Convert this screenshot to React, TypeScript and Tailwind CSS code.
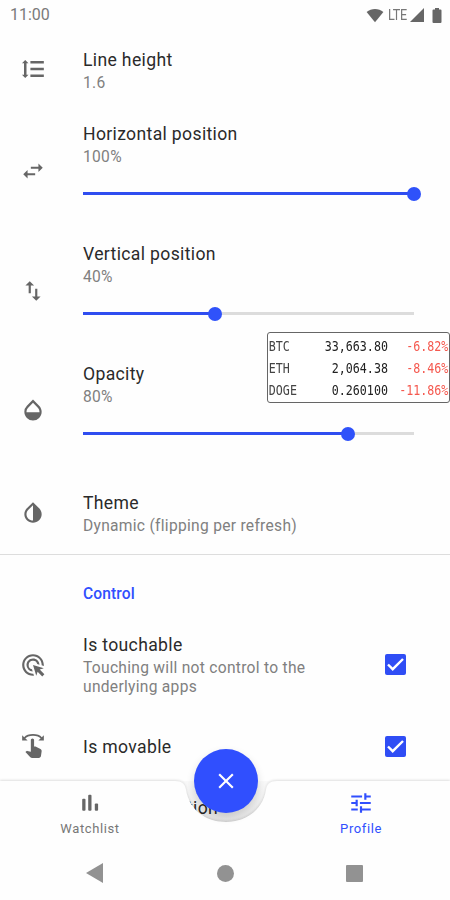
import React from "react";
import {
  MdAdsClick,
  MdClose,
  MdInvertColors,
  MdOpacity,
  MdSwapHoriz,
  MdSwapVert,
  MdSwipe,
  MdTune,
} from "react-icons/md";

interface SettingProps {
  icon: React.ReactNode;
  title: string;
  summary?: string;
  className: string;
  iconClassName?: string;
  children?: React.ReactNode;
  checked?: boolean;
}

function Setting({ icon, title, summary, className, iconClassName = "", children, checked }: SettingProps) {
  return (
    <div className={`flex shrink-0 ${className}`}>
      <div className={`ml-5 w-[63px] shrink-0 text-[26px] text-[#666] ${iconClassName}`}>{icon}</div>
      <div className="w-[331px] shrink-0">
        <div className="flex">
          <div className="grow">
            <h2 className="text-[17.6px] leading-6 tracking-[0.34px] text-[#2a2a2a]">{title}</h2>
            {summary && (
              <p className="mt-[2px] w-[240px] text-[15.6px] leading-[19px] tracking-[0.28px] whitespace-pre-line text-[#808080]">
                {summary}
              </p>
            )}
          </div>
          {checked && (
            <span className={`mr-2 flex size-[21px] shrink-0 items-center justify-center rounded-[2px] bg-[#2f4df5] text-white ${summary ? "mt-[21px]" : "mt-[1px]"}`}>
              <svg width="21" height="21" viewBox="0 0 21 21" fill="none" stroke="currentColor" strokeWidth="2.4">
                <path d="M3 10.500l4.700 4.700L18 5" />
              </svg>
            </span>
          )}
        </div>
        {children}
      </div>
    </div>
  );
}

function Slider({ value }: { value: number }) {
  return (
    <div className="relative mt-[25px] h-[3px] bg-[#dcdcdc]">
      <div className="h-full bg-[#2f4df0]" style={{ width: `${value}%` }} />
      <div
        className="absolute top-1/2 size-[14px] -translate-x-1/2 -translate-y-1/2 rounded-full bg-[#2f52fa]"
        style={{ left: `${value}%` }}
      />
    </div>
  );
}

function LineSpacingIcon() {
  return (
    <svg viewBox="0 0 24 24" width="26" height="26" fill="currentColor">
      <path d="M9.600 13.100H22v-2.200H9.600m0 8.400H22v-2.200H9.600m0-10.200H22V4.700H9.600M6 6.700h1.800L4.800 3.600 1.800 6.700H3.700v10.600H1.800l3 3.100 3-3.100H6z" />
    </svg>
  );
}

function BarsIcon() {
  return (
    <svg width="26" height="26" viewBox="0 0 26 26" fill="currentColor">
      <rect x="5.200" y="8.700" width="3.300" height="12" rx="1" />
      <rect x="11.200" y="4.800" width="3.300" height="15.900" rx="1" />
      <rect x="17.800" y="13.500" width="3.300" height="7.200" rx="1" />
    </svg>
  );
}

const quotes = [
  { symbol: "BTC", price: "33,663.80", change: "-6.82%" },
  { symbol: "ETH", price: "2,064.38", change: "-8.46%" },
  { symbol: "DOGE", price: "0.260100", change: "-11.86%" },
];

function Ticker() {
  return (
    <div className="absolute top-[332px] left-[267px] h-[71px] w-[183px] rounded-[3px] border border-[#666] bg-white/80 pt-[2px]">
      <div className="w-[225px] origin-left scale-x-[0.805] pl-[1px] font-['DejaVu_Sans_Mono',monospace] text-[14.5px] leading-[22px]">
        {quotes.map((quote) => (
          <div key={quote.symbol} className="flex">
            <span className="w-[50px] text-[#444]">{quote.symbol}</span>
            <span className="w-[98px] text-right text-[#222]">{quote.price}</span>
            <span className="w-[75px] text-right text-[#f5594f]">{quote.change}</span>
          </div>
        ))}
      </div>
    </div>
  );
}

function StatusBar() {
  return (
    <div className="flex h-[30px] shrink-0 items-center pr-2 pl-[10px] text-[#666]">
      <span className="grow text-[16px] leading-[30px] text-[#7a7a7a]">11:00</span>
      <svg width="18" height="15" viewBox="0 0 18 15" fill="currentColor">
        <path d="M9 14.2L.6 4.1C5.4.1 12.600.1 17.400 4.100z" />
      </svg>
      <span className="ml-[4px] w-[20px] origin-left scale-x-[0.84] text-[15px] leading-[30px] tracking-[-0.3px] text-[#777]">LTE</span>
      <svg className="ml-[2px]" width="14" height="14" viewBox="0 0 14 14" fill="currentColor">
        <path d="M14 0v14H0z" />
      </svg>
      <svg className="ml-[8px]" width="10" height="15" viewBox="0 0 10 15" fill="currentColor">
        <path d="M3 0h4v1.500h1.500q1 0 1 1v11.500q0 1-1 1h-7q-1 0-1-1V2.500q0-1 1-1H3z" />
      </svg>
    </div>
  );
}

function BottomBar() {
  return (
    <div className="absolute inset-x-0 top-[781px] h-[119px]">
      {/* shade inside the cradle, then the bar surface with the cradle cut out */}
      <svg className="absolute inset-x-0 -top-[10px]" width="450" height="129" viewBox="0 -10 450 129">
        <defs>
          <linearGradient id="cradle" x1="0" y1="0" x2="0" y2="1">
            <stop offset="0" stopColor="#000" stopOpacity="0.02" />
            <stop offset="1" stopColor="#000" stopOpacity="0.1" />
          </linearGradient>
        </defs>
        <path d="M182 0H270C267 3 266 6 266 9C263 28 247 41 226 41C205 41 189 28 186 9Q185 3 182 0z" fill="url(#cradle)" />
        <path
          className="drop-shadow-[0_-1px_1px_rgba(0,0,0,0.12)]"
          d="M0 0H175C182 0 185 3 186 9C189 28 205 41 226 41C247 41 263 28 266 9C267 3 270 0 277 0H450V119H0z"
          fill="#fefefe"
        />
      </svg>
      <button className="absolute -top-[32px] left-[193.5px] flex size-16 items-center justify-center rounded-full bg-[#304ffe] text-[26px] text-white shadow-[0_4px_8px_rgba(0,0,0,0.14)]">
        <MdClose />
      </button>
      <div className="relative flex justify-between px-[49px] pt-[9px] text-[13px] leading-[18px] tracking-[0.6px]">
        <div className="flex w-[82px] flex-col items-center text-[#777]">
          <span className="text-[#666]">
            <BarsIcon />
          </span>
          <span className="mt-[4px]">Watchlist</span>
        </div>
        <div className="flex w-[80px] flex-col items-center text-[#304ffe]">
          <MdTune className="text-[26px]" />
          <span className="mt-[4px]">Profile</span>
        </div>
      </div>
      <div className="relative mt-[25px] flex items-center text-[#929292]">
        <svg className="ml-[86px]" width="17" height="20" viewBox="0 0 17 20" fill="currentColor">
          <path d="M17 0v20L0 10z" />
        </svg>
        <span className="ml-[114px] size-[17px] rounded-full bg-current" />
        <span className="ml-[112px] size-[17px] rounded-[1px] bg-current" />
      </div>
    </div>
  );
}

export default function App() {
  return (
    <div className="relative flex h-[900px] w-[450px] flex-col overflow-hidden bg-[#fefefe] font-[Roboto,sans-serif]">
      <StatusBar />
      <Setting className="mt-[18px] h-[74px]" iconClassName="pt-[8px]" icon={<LineSpacingIcon />} title="Line height" summary="1.6" />
      <Setting className="h-[120px]" iconClassName="pt-[36px]" icon={<MdSwapHoriz />} title="Horizontal position" summary="100%">
        <Slider value={100} />
      </Setting>
      <Setting className="h-[120px]" iconClassName="pt-[36px]" icon={<MdSwapVert />} title="Vertical position" summary="40%">
        <Slider value={40} />
      </Setting>
      <Setting className="h-[129px]" iconClassName="pt-[35px]" icon={<MdOpacity />} title="Opacity" summary="80%">
        <Slider value={80} />
      </Setting>
      <Setting className="h-[63px]" iconClassName="pt-[9px]" icon={<MdInvertColors />} title="Theme" summary="Dynamic (flipping per refresh)" />
      <div className="h-px shrink-0 bg-[#ddd]" />
      <h3 className="mt-[29px] ml-[83px] h-[49px] shrink-0 text-[15.6px] leading-5 font-medium tracking-[0.1px] text-[#304ffe]">Control</h3>
      <Setting
        className="h-[102px]"
        iconClassName="pt-[19px]"
        icon={<MdAdsClick />}
        title="Is touchable"
        summary={"Touching will not control to the\nunderlying apps"}
        checked
      />
      <Setting className="h-[61px]" iconClassName="-mt-[2px]" icon={<MdSwipe />} title="Is movable" checked />
      <div className="ml-[187px] text-[17.6px] leading-6 tracking-[0.34px] text-[#2a2a2a]">tion</div>
      <Ticker />
      <BottomBar />
    </div>
  );
}
